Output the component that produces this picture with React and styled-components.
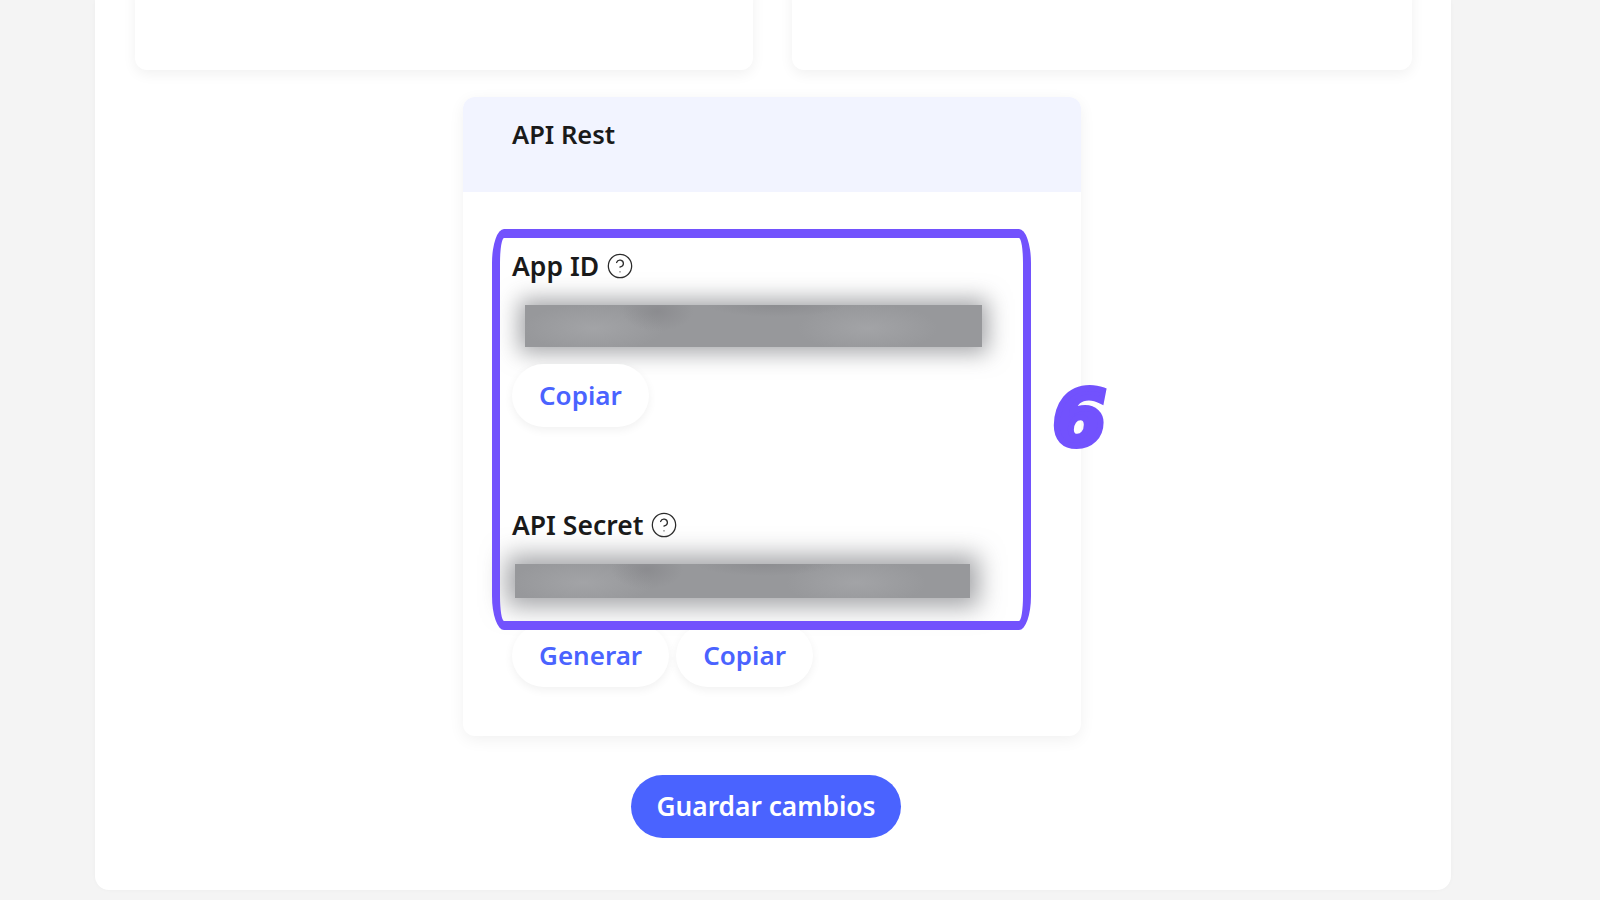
import React from "react";
import styled, { createGlobalStyle } from "styled-components";
import { CircleHelp } from "lucide-react";

const Global = createGlobalStyle`
  html, body { margin: 0; padding: 0; background: #f4f4f4; }
  body { font-family: "Noto Sans", "Open Sans", sans-serif; }
`;

const Page = styled.div`
  width: 1600px;
  height: 900px;
  overflow: hidden;
  padding-left: 95px;
  box-sizing: border-box;
  background: #f4f4f4;
`;

const Panel = styled.main`
  width: 1356px;
  height: 890px;
  box-sizing: border-box;
  padding: 0 39px 0 40px;
  background: #fff;
  border-radius: 0 0 14px 14px;
  box-shadow: 0 0 4px rgba(0, 0, 0, 0.03);
  display: flex;
  flex-direction: column;
`;

const TopRow = styled.div`
  display: grid;
  grid-template-columns: 618px 620px;
  column-gap: 39px;
  margin-top: -20px;
`;

const TopCard = styled.div`
  height: 90px;
  background: #fff;
  border-radius: 12px;
  box-shadow: 0 4px 14px rgba(0, 0, 0, 0.06);
`;

const ApiCard = styled.section`
  position: relative;
  width: 618px;
  margin: 27px 0 0 328px;
  height: 639px;
  box-sizing: border-box;
  background: #fff;
  border-radius: 12px;
  box-shadow: 0 4px 16px rgba(0, 0, 0, 0.06);
  display: flex;
  flex-direction: column;
`;

const CardHeader = styled.header`
  height: 95px;
  box-sizing: border-box;
  padding: 17px 49px 0;
  background: #f2f4ff;
  border-radius: 12px 12px 0 0;
`;

const CardTitle = styled.h2`
  margin: 0;
  font-size: 25.5px;
  line-height: 40px;
  font-weight: 600;
  color: #1a1a1a;
`;

const CardBody = styled.div`
  padding: 55px 49px 0;
  display: flex;
  flex-direction: column;
`;

const Field = styled.div`
  display: flex;
  flex-direction: column;
  height: ${(p) => p.$height}px;
`;

const Label = styled.label`
  display: flex;
  align-items: center;
  gap: 7px;
  height: 38px;
  font-size: 26.5px;
  font-weight: 600;
  color: #1a1a1a;
`;

const HelpIcon = styled(CircleHelp)`
  width: 28px;
  height: 28px;
  stroke-width: 1.1;
  color: #2b2b2b;
  flex: none;
`;

const Redacted = styled.div`
  width: ${(p) => p.$width}px;
  height: ${(p) => p.$h}px;
  margin: ${(p) => p.$top}px 0 0 ${(p) => p.$left}px;
  background:
    radial-gradient(ellipse 36px 20px at 29% 15%, rgba(125, 125, 129, 0.45), transparent),
    radial-gradient(ellipse 70px 24px at 15% 55%, rgba(172, 173, 176, 0.55), transparent),
    radial-gradient(ellipse 70px 24px at 75% 55%, rgba(172, 173, 176, 0.55), transparent),
    radial-gradient(ellipse 70px 12px at 55% 0%, rgba(125, 125, 129, 0.4), transparent),
    #97989b;
  box-shadow: 0 0 ${(p) => p.$blur}px ${(p) => p.$spread}px rgba(135, 136, 140, 0.75);
`;

const Actions = styled.div`
  display: flex;
  gap: 7px;
  margin-top: ${(p) => p.$top}px;
`;

const PillButton = styled.button`
  height: 63px;
  padding: 0 27px 2px;
  border: 0;
  border-radius: 32px;
  background: #fff;
  color: #4a63ff;
  font: 600 26px "Noto Sans", sans-serif;
  box-shadow: 0 3px 10px rgba(0, 0, 0, 0.06);
`;

const Highlight = styled.div`
  position: absolute;
  left: 29px;
  top: 132px;
  width: 539px;
  height: 401px;
  box-sizing: border-box;
  border: solid #7252fd;
  border-width: 9px 8px;
  border-radius: 12px / 34px;
  pointer-events: none;
`;

const StepNumber = styled.span`
  position: absolute;
  left: 590px;
  top: 272px;
  font: italic 700 76px/100px "DejaVu Sans", sans-serif;
  color: #7252fd;
  -webkit-text-stroke: 6px #7252fd;
`;

const SaveRow = styled.div`
  display: flex;
  margin: 39px 0 0 496px;
`;

const SaveButton = styled.button`
  height: 63px;
  width: 270px;
  padding: 0 0 2px;
  border: 0;
  border-radius: 32px;
  background: #4a63ff;
  color: #fff;
  font: 600 26.3px "Noto Sans", sans-serif;
`;

export default function App() {
  return (
    <Page>
      <Global />
      <Panel>
        <TopRow>
          <TopCard />
          <TopCard />
        </TopRow>
        <ApiCard>
          <CardHeader>
            <CardTitle>API Rest</CardTitle>
          </CardHeader>
          <CardBody>
            <Field $height={259}>
              <Label>App ID <HelpIcon /></Label>
              <Redacted $width={457} $h={42} $top={20} $left={13} $blur={22} $spread={6} />
              <Actions $top={17}>
                <PillButton>Copiar</PillButton>
              </Actions>
            </Field>
            <Field $height={200}>
              <Label>API Secret <HelpIcon /></Label>
              <Redacted $width={455} $h={34} $top={20} $left={3} $blur={24} $spread={9} />
              <Actions $top={26}>
                <PillButton>Generar</PillButton>
                <PillButton>Copiar</PillButton>
              </Actions>
            </Field>
          </CardBody>
          <Highlight />
          <StepNumber>6</StepNumber>
        </ApiCard>
        <SaveRow>
          <SaveButton>Guardar cambios</SaveButton>
        </SaveRow>
      </Panel>
    </Page>
  );
}
